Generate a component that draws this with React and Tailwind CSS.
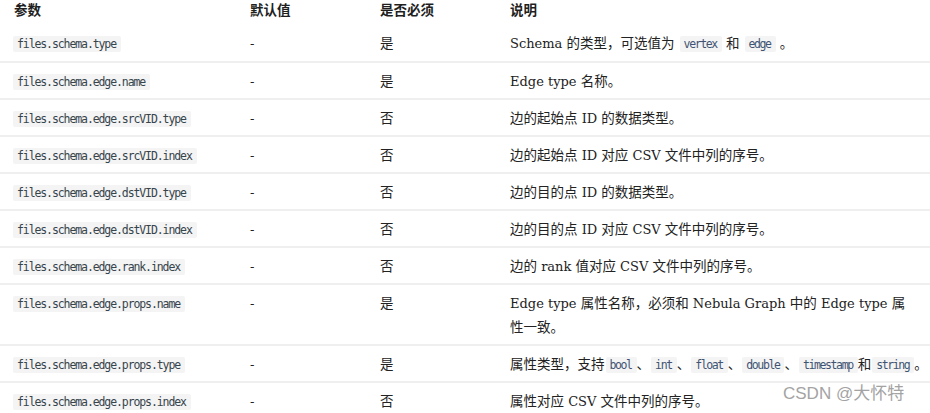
import React from "react";

const CJK = /([\u2E80-\u9FFF\u3000-\u303F\uFF00-\uFFEF]+)/;

function Txt({ s }) {
  const parts = s.split(CJK).filter((p) => p !== "");
  return (
    <>
      {parts.map((p, i) =>
        CJK.test(p) ? (
          <span key={i} className="font-['Noto_Sans_CJK_SC',sans-serif] text-[13.5px]">
            {p}
          </span>
        ) : (
          <span key={i} className="font-['DejaVu_Serif',serif] text-[13px]">
            {p}
          </span>
        )
      )}
    </>
  );
}

function Code({ children }) {
  return (
    <code className="font-['DejaVu_Sans_Mono',monospace] text-[11.5px] tracking-[-1.1px] bg-[#f4f4f4] rounded-[2px] pl-[4px] pr-[5px] py-[1px] text-[#37444c]">
      {children}
    </code>
  );
}

function BCode({ children }) {
  return (
    <code className="font-['DejaVu_Sans_Mono',monospace] text-[11.5px] tracking-[-1.4px] bg-[#f4f4f4] rounded-[2px] pl-[4px] pr-[5px] py-[1px] ml-[1px] text-[#3f5373]">
      {children}
    </code>
  );
}

const rows = [
  {
    k: "files.schema.type",
    r: "是",
    d: (
      <>
        <Txt s="Schema 的类型，可选值为 " />
        <BCode>vertex</BCode>
        <Txt s=" 和 " />
        <BCode>edge</BCode>
        <Txt s=" 。" />
      </>
    ),
  },
  { k: "files.schema.edge.name", r: "是", d: <Txt s="Edge type 名称。" /> },
  { k: "files.schema.edge.srcVID.type", r: "否", d: <Txt s="边的起始点 ID 的数据类型。" /> },
  { k: "files.schema.edge.srcVID.index", r: "否", d: <Txt s="边的起始点 ID 对应 CSV 文件中列的序号。" /> },
  { k: "files.schema.edge.dstVID.type", r: "否", d: <Txt s="边的目的点 ID 的数据类型。" /> },
  { k: "files.schema.edge.dstVID.index", r: "否", d: <Txt s="边的目的点 ID 对应 CSV 文件中列的序号。" /> },
  { k: "files.schema.edge.rank.index", r: "否", d: <Txt s="边的 rank 值对应 CSV 文件中列的序号。" /> },
  {
    k: "files.schema.edge.props.name",
    r: "是",
    d: (
      <span className="whitespace-nowrap">
        <Txt s="Edge type 属性名称，必须和 Nebula Graph 中的 Edge type 属" />
        <br />
        <Txt s="性一致。" />
      </span>
    ),
    h: "h-[61px]",
  },
  {
    k: "files.schema.edge.props.type",
    r: "是",
    d: (
      <span className="whitespace-nowrap">
        <Txt s="属性类型，支持" />
        <BCode>bool</BCode>
        <Txt s="、" />
        <BCode>int</BCode>
        <Txt s="、" />
        <BCode>float</BCode>
        <Txt s="、" />
        <BCode>double</BCode>
        <Txt s="、" />
        <BCode>timestamp</BCode>
        <Txt s="和" />
        <BCode>string</BCode>
        <Txt s="。" />
      </span>
    ),
  },
  { k: "files.schema.edge.props.index", r: "否", d: <Txt s="属性对应 CSV 文件中列的序号。" /> },
];

export default function App() {
  return (
    <div className="relative w-[930px] h-[413px] overflow-hidden bg-white text-[#222222]">
      <div className="grid grid-cols-[250px_130px_130px_1fr] h-[25px] font-['Noto_Sans_CJK_SC',sans-serif] font-bold text-[13.5px] leading-[18px] text-[#1f1f1f]">
        <div className="pl-[14px]">参数</div>
        <div>默认值</div>
        <div>是否必须</div>
        <div>说明</div>
      </div>
      {rows.map((row, i) => (
        <div
          key={i}
          className={
            "grid grid-cols-[250px_130px_130px_1fr] leading-[23px] pt-[6px] overflow-hidden " +
            (i === 0 ? "h-[36px]" : "border-t-2 border-[#efefef] " + (row.h || "h-[37px]"))
          }
        >
          <div className="pl-[13px]">
            <Code>{row.k}</Code>
          </div>
          <div>
            <Txt s="-" />
          </div>
          <div>
            <Txt s={row.r} />
          </div>
          <div className="pr-[4px]">{row.d}</div>
        </div>
      ))}
      <div className="absolute left-[783px] top-[384px] font-['Liberation_Sans_Narrow','Liberation_Sans','Noto_Sans_CJK_SC',sans-serif] text-[17px] leading-[20px] text-[#a3a3a3] whitespace-nowrap">
        CSDN @大怀特
      </div>
    </div>
  );
}
